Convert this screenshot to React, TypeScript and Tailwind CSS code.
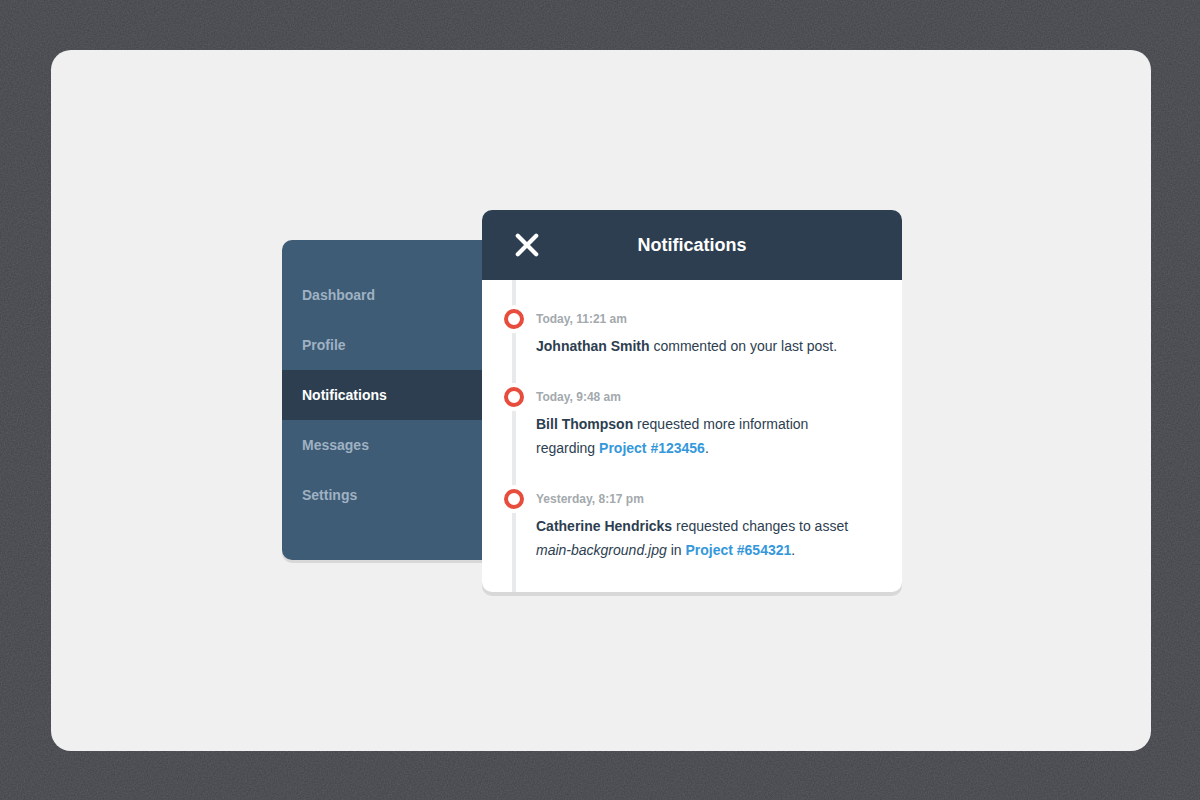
import React from "react";

interface NotificationItem {
  id: number;
  time: string;
  body: React.ReactNode;
}

const menuItems = ["Dashboard", "Profile", "Notifications", "Messages", "Settings"];

const ProjectLink = ({ id }: { id: string }) => (
  <a href={`#project-${id}`} className="font-bold text-[#3498db]">
    Project #{id}
  </a>
);

const notifications: NotificationItem[] = [
  {
    id: 1,
    time: "Today, 11:21 am",
    body: (
      <>
        <b>Johnathan Smith</b> commented on your last post.
      </>
    ),
  },
  {
    id: 2,
    time: "Today, 9:48 am",
    body: (
      <>
        <b>Bill Thompson</b> requested more information regarding <ProjectLink id="123456" />.
      </>
    ),
  },
  {
    id: 3,
    time: "Yesterday, 8:17 pm",
    body: (
      <>
        <b>Catherine Hendricks</b> requested changes to asset <i>main-background.jpg</i> in{" "}
        <ProjectLink id="654321" />.
      </>
    ),
  },
];

// Fine grain over the dark page background
function Grain() {
  return (
    <svg className="absolute inset-0 h-full w-full opacity-10" aria-hidden="true">
      <filter id="grain" x="0" y="0" width="100%" height="100%" colorInterpolationFilters="sRGB">
        <feTurbulence type="fractalNoise" baseFrequency="0.7" numOctaves="2" stitchTiles="stitch" />
        <feColorMatrix type="matrix" values="1 0 0 0 -0.2  1 0 0 0 -0.2  1 0 0 0 -0.18  0 0 0 0 1" />
      </filter>
      <rect width="100%" height="100%" filter="url(#grain)" />
    </svg>
  );
}

function Menu() {
  return (
    <nav className="mt-[30px] w-[200px] shrink-0 rounded-l-[10px] bg-[#3e5c76] pt-[30px] pb-10 shadow-[0_3px_0_#d8d8d8]">
      <ul>
        {menuItems.map((item) => (
          <li key={item}>
            <a
              href={`#${item.toLowerCase()}`}
              className={`block px-5 text-sm leading-[50px] font-bold ${
                item === "Notifications" ? "bg-[#2c3e50] text-white" : "text-[#9fb1c2]"
              }`}
            >
              {item}
            </a>
          </li>
        ))}
      </ul>
    </nav>
  );
}

function NotificationsPanel() {
  return (
    <section className="relative w-[420px] rounded-[10px] bg-white shadow-[0_4px_0_#d8d8d8]">
      <header className="grid h-[70px] grid-cols-[90px_1fr_90px] items-center rounded-t-[10px] bg-[#2c3e50] text-white">
        <button type="button" aria-label="Close" className="justify-self-center">
          <svg width="24" height="24" viewBox="0 0 24 24" className="block" aria-hidden="true">
            <path d="M2.8 2.8L21.2 21.2M21.2 2.8L2.8 21.2" stroke="currentColor" strokeWidth="4.2" strokeLinecap="round" />
          </svg>
        </button>
        <h1 className="text-center text-lg font-bold">Notifications</h1>
      </header>

      <div className="relative pt-[29px] pr-10 pb-[30px] pl-[22px]">
        <div className="absolute inset-y-0 left-[30px] w-1 bg-[#e8eaec]" />
        <ol className="flex flex-col gap-[29px]">
          {notifications.map((n) => (
            <li key={n.id} className="flex gap-3">
              <span className="relative size-5 shrink-0 rounded-full border-4 border-[#e74c3c] bg-white shadow-[0_0_0_4px_#fff]" />
              <div>
                <time className="block text-xs leading-5 font-bold text-[#a3a9ad]">{n.time}</time>
                <p className="mt-[5px] text-sm leading-6 text-[#2c3e50]">{n.body}</p>
              </div>
            </li>
          ))}
        </ol>
      </div>
    </section>
  );
}

export default function App() {
  return (
    <div className="relative flex min-h-screen bg-[#4e5055] pt-[50px] pr-[49px] pb-[49px] pl-[51px] font-['Liberation_Sans',Arial,sans-serif]">
      <Grain />
      <main className="relative flex flex-1 items-center justify-center rounded-[20px] bg-[#f0f0f0] pr-[18px]">
        <div className="flex items-start">
          <Menu />
          <NotificationsPanel />
        </div>
      </main>
    </div>
  );
}
